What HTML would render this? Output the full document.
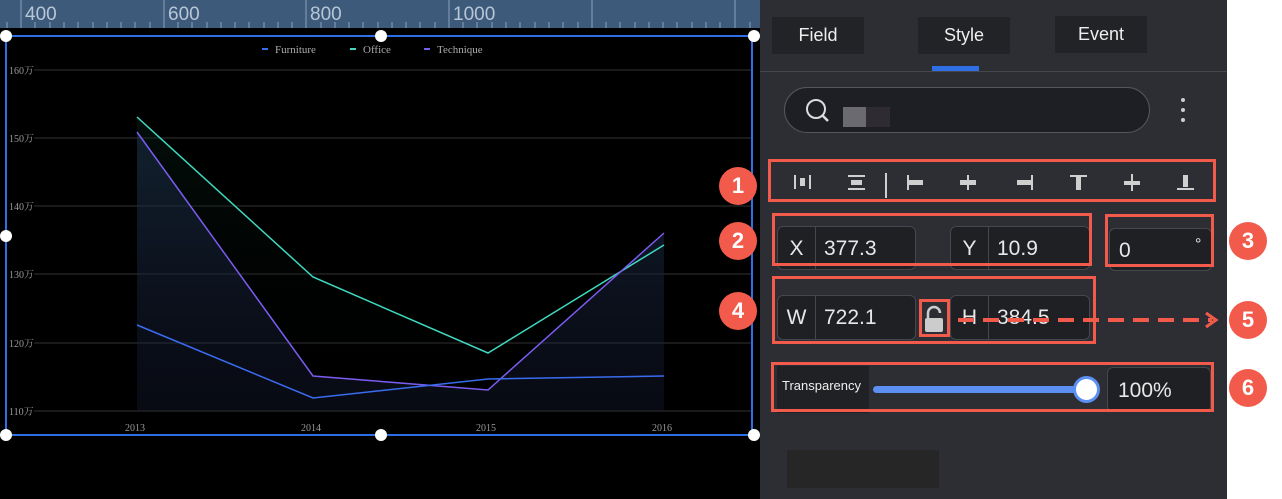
<!DOCTYPE html><html><head><meta charset="utf-8"><style>
*{margin:0;padding:0;box-sizing:border-box}
body{width:1282px;height:499px;overflow:hidden;background:#fff;font-family:"Liberation Sans",sans-serif;position:relative}
.a{position:absolute}
.rb{position:absolute;border:3px solid #f25a4b}
.num{position:absolute;width:38px;height:38px;border-radius:50%;background:#f25a4b;color:#fff;font-size:22px;font-weight:bold;text-align:center;line-height:38px}
.fld{position:absolute;border:1px solid #45474d;border-radius:6px;background:#1f2024;color:#e8e8e8;font-size:21px}
.fld .l{position:absolute;left:0;top:0;bottom:0;width:38px;border-right:1px solid #45474d;text-align:center;line-height:44px}
.fld .v{position:absolute;left:46px;top:0;line-height:44px}
.tab{position:absolute;background:#222326;color:#eee;font-size:18px;text-align:center;line-height:37px;width:92px;height:37px}
.h{position:absolute;width:12px;height:12px;border-radius:50%;background:#fff;margin:-6px 0 0 -6px}
.ic{position:absolute;background:#cfcfcf}
</style></head><body>
<div class="a" style="left:0;top:0;width:760px;height:499px;background:#000"></div>
<div class="a" style="left:0;top:0;width:760px;height:28px;background:#3d5a7b"></div>
<svg class="a" style="left:0;top:0" width="760" height="28">
<g stroke="#8aa0b8" stroke-width="1">
<path d="M21 0V28M164 0V28M306 0V28M449 0V28M592 0V28M735 0V28"/>
<path d="M7 22V28M35 22V28M50 22V28M64 22V28M78 22V28M93 22V28M107 22V28M121 22V28M135 22V28M150 22V28M178 22V28M192 22V28M207 22V28M221 22V28M235 22V28M249 22V28M264 22V28M278 22V28M292 22V28M321 22V28M335 22V28M349 22V28M363 22V28M378 22V28M392 22V28M406 22V28M420 22V28M435 22V28M463 22V28M477 22V28M492 22V28M506 22V28M520 22V28M535 22V28M549 22V28M563 22V28M578 22V28M606 22V28M620 22V28M635 22V28M649 22V28M663 22V28M677 22V28M692 22V28M706 22V28M720 22V28M750 22V28"/>
</g>
<g fill="#b8c6d6" font-size="19" font-family="Liberation Sans"><text x="25" y="20">400</text><text x="168" y="20">600</text><text x="310" y="20">800</text><text x="453" y="20">1000</text></g>
</svg>
<svg class="a" style="left:0;top:0" width="760" height="499">
<defs>
<linearGradient id="g1" x1="0" y1="0" x2="0" y2="1"><stop offset="0" stop-color="#2a3a6a" stop-opacity=".5"/><stop offset="1" stop-color="#1a2340" stop-opacity=".3"/></linearGradient>
<linearGradient id="g2" x1="0" y1="0" x2="0" y2="1"><stop offset="0" stop-color="#0a2a20" stop-opacity=".6"/><stop offset="1" stop-color="#000" stop-opacity="0"/></linearGradient>
</defs>
<g stroke="#333" stroke-width="1"><path d="M34 70H752M34 138H752M34 206H752M34 274H752M34 343H752M34 411H752"/></g>
<g fill="#999" font-size="10" font-family="Liberation Serif, Noto Serif CJK SC, serif">
<text x="9" y="74">160万</text><text x="9" y="142">150万</text><text x="9" y="210">140万</text><text x="9" y="278">130万</text><text x="9" y="347">120万</text><text x="9" y="415">110万</text>
<text x="125" y="431">2013</text><text x="301" y="431">2014</text><text x="476" y="431">2015</text><text x="652" y="431">2016</text>
<text x="275" y="53" font-size="11" fill="#aaa">Furniture</text><text x="363" y="53" font-size="11" fill="#aaa">Office</text><text x="437" y="53" font-size="11" fill="#aaa">Technique</text>
</g>
<rect x="262" y="48" width="6" height="2" fill="#3a6cf0"/><rect x="350" y="48" width="6" height="2" fill="#3fd9c0"/><rect x="424" y="48" width="6" height="2" fill="#7b5cf0"/>
<path d="M137 132L313 376L488 390L664 233V411H137Z" fill="url(#g1)"/>
<path d="M137 117L313 277L488 353L664 245L664 411H137Z" fill="url(#g2)" opacity=".6"/>
<polyline points="137,117 313,277 488,353 664,245" fill="none" stroke="#3fd9c0" stroke-width="1.5"/>
<polyline points="137,132 313,376 488,390 664,233" fill="none" stroke="#7b5cf0" stroke-width="1.5"/>
<polyline points="137,325 313,398 488,379 664,376" fill="none" stroke="#3a6cf0" stroke-width="1.5"/>
<rect x="6" y="36" width="746" height="399" fill="none" stroke="#2f6fe6" stroke-width="2"/>
</svg>
<div class="h" style="left:6px;top:36px"></div><div class="h" style="left:381px;top:36px"></div><div class="h" style="left:754px;top:36px"></div>
<div class="h" style="left:6px;top:236px"></div>
<div class="h" style="left:6px;top:435px"></div><div class="h" style="left:381px;top:435px"></div><div class="h" style="left:754px;top:435px"></div>

<div class="a" style="left:760px;top:0;width:467px;height:499px;background:#2c2e34"></div>
<div class="a" style="left:760px;top:71px;width:467px;height:1px;background:#45474d"></div>
<div class="tab" style="left:772px;top:17px">Field</div>
<div class="tab" style="left:918px;top:17px">Style</div>
<div class="tab" style="left:1055px;top:16px">Event</div>
<div class="a" style="left:932px;top:66px;width:47px;height:5px;background:#2f6fe6"></div>
<div class="a" style="left:784px;top:87px;width:366px;height:46px;border:1px solid #55575d;border-radius:23px;background:#1e1f24"></div>
<svg class="a" style="left:804px;top:97px" width="28" height="28"><circle cx="12" cy="12" r="9" fill="none" stroke="#ddd" stroke-width="2"/><path d="M18 18L24 24" stroke="#ddd" stroke-width="2.5"/></svg>
<div class="a" style="left:843px;top:107px;width:23px;height:20px;background:#6a6a70"></div>
<div class="a" style="left:866px;top:107px;width:24px;height:20px;background:#2e2c32"></div>
<div class="a" style="left:1181px;top:98px;width:4px;height:4px;border-radius:2px;background:#ccc"></div>
<div class="a" style="left:1181px;top:108px;width:4px;height:4px;border-radius:2px;background:#ccc"></div>
<div class="a" style="left:1181px;top:118px;width:4px;height:4px;border-radius:2px;background:#ccc"></div>

<svg class="a" style="left:760px;top:150px" width="467" height="70" fill="#cfcfcf">
<rect x="34" y="25" width="2" height="14"/><rect x="40" y="28" width="5" height="8"/><rect x="49" y="25" width="2" height="14"/>
<rect x="88" y="25" width="17" height="2"/><rect x="91" y="30" width="11" height="5"/><rect x="88" y="38" width="17" height="2"/>
<rect x="125" y="23" width="2" height="25"/>
<rect x="147" y="25" width="2" height="15"/><rect x="149" y="30" width="14" height="5"/>
<rect x="207" y="25" width="2" height="15"/><rect x="200" y="30" width="16" height="5"/>
<rect x="257" y="30" width="14" height="5"/><rect x="271" y="25" width="2" height="15"/>
<rect x="310" y="25" width="17" height="2"/><rect x="316" y="27" width="5" height="13"/>
<rect x="371" y="24" width="2" height="17"/><rect x="364" y="31" width="16" height="4"/>
<rect x="423" y="25" width="5" height="12"/><rect x="417" y="38" width="17" height="2"/>
</svg>

<div class="fld" style="left:777px;top:226px;width:139px;height:44px"><div class="l">X</div><div class="v">377.3</div></div>
<div class="fld" style="left:950px;top:226px;width:140px;height:44px"><div class="l">Y</div><div class="v">10.9</div></div>
<div class="fld" style="left:1109px;top:228px;width:103px;height:43px"><div class="v" style="left:9px">0</div><div class="v" style="left:85px;top:-6px;font-size:16px">°</div></div>
<div class="fld" style="left:777px;top:295px;width:139px;height:45px"><div class="l">W</div><div class="v">722.1</div></div>
<div class="fld" style="left:950px;top:295px;width:140px;height:45px"><div class="l">H</div><div class="v">384.5</div></div>
<svg class="a" style="left:922px;top:304px" width="26" height="30"><path d="M6 14V9a6 6 0 0 1 12 0" fill="none" stroke="#ccc" stroke-width="2.5"/><rect x="3" y="14" width="18" height="14" rx="2" fill="#ccc"/></svg>

<div class="a" style="left:777px;top:366px;width:92px;height:47px;background:#202124;color:#eee;font-size:13px;line-height:40px;padding-left:5px">Transparency</div>
<div class="a" style="left:873px;top:386px;width:213px;height:7px;border-radius:4px;background:#5b8ff2"></div>
<div class="a" style="left:1073px;top:376px;width:27px;height:27px;border-radius:50%;background:#fff;border:3px solid #5b8ff2"></div>
<div class="fld" style="left:1107px;top:367px;width:104px;height:45px"><div class="v" style="left:10px;top:1px">100%</div></div>
<div class="a" style="left:787px;top:450px;width:152px;height:38px;background:#262627"></div>

<div class="rb" style="left:768px;top:159px;width:448px;height:43px"></div>
<div class="rb" style="left:772px;top:213px;width:320px;height:53px"></div>
<div class="rb" style="left:1105px;top:214px;width:109px;height:53px"></div>
<div class="rb" style="left:772px;top:276px;width:324px;height:68px"></div>
<div class="rb" style="left:919px;top:299px;width:31px;height:38px"></div>
<div class="rb" style="left:771px;top:362px;width:443px;height:50px"></div>
<svg class="a" style="left:950px;top:308px" width="275" height="26"><path d="M8 12H262" stroke="#f25a4b" stroke-width="4" stroke-dasharray="16 9"/><path d="M256 5L266 12L256 19" fill="none" stroke="#f25a4b" stroke-width="3"/></svg>
<div class="num" style="left:719px;top:167px">1</div>
<div class="num" style="left:719px;top:222px">2</div>
<div class="num" style="left:1229px;top:222px">3</div>
<div class="num" style="left:719px;top:292px">4</div>
<div class="num" style="left:1229px;top:301px">5</div>
<div class="num" style="left:1229px;top:369px">6</div>
</body></html>
